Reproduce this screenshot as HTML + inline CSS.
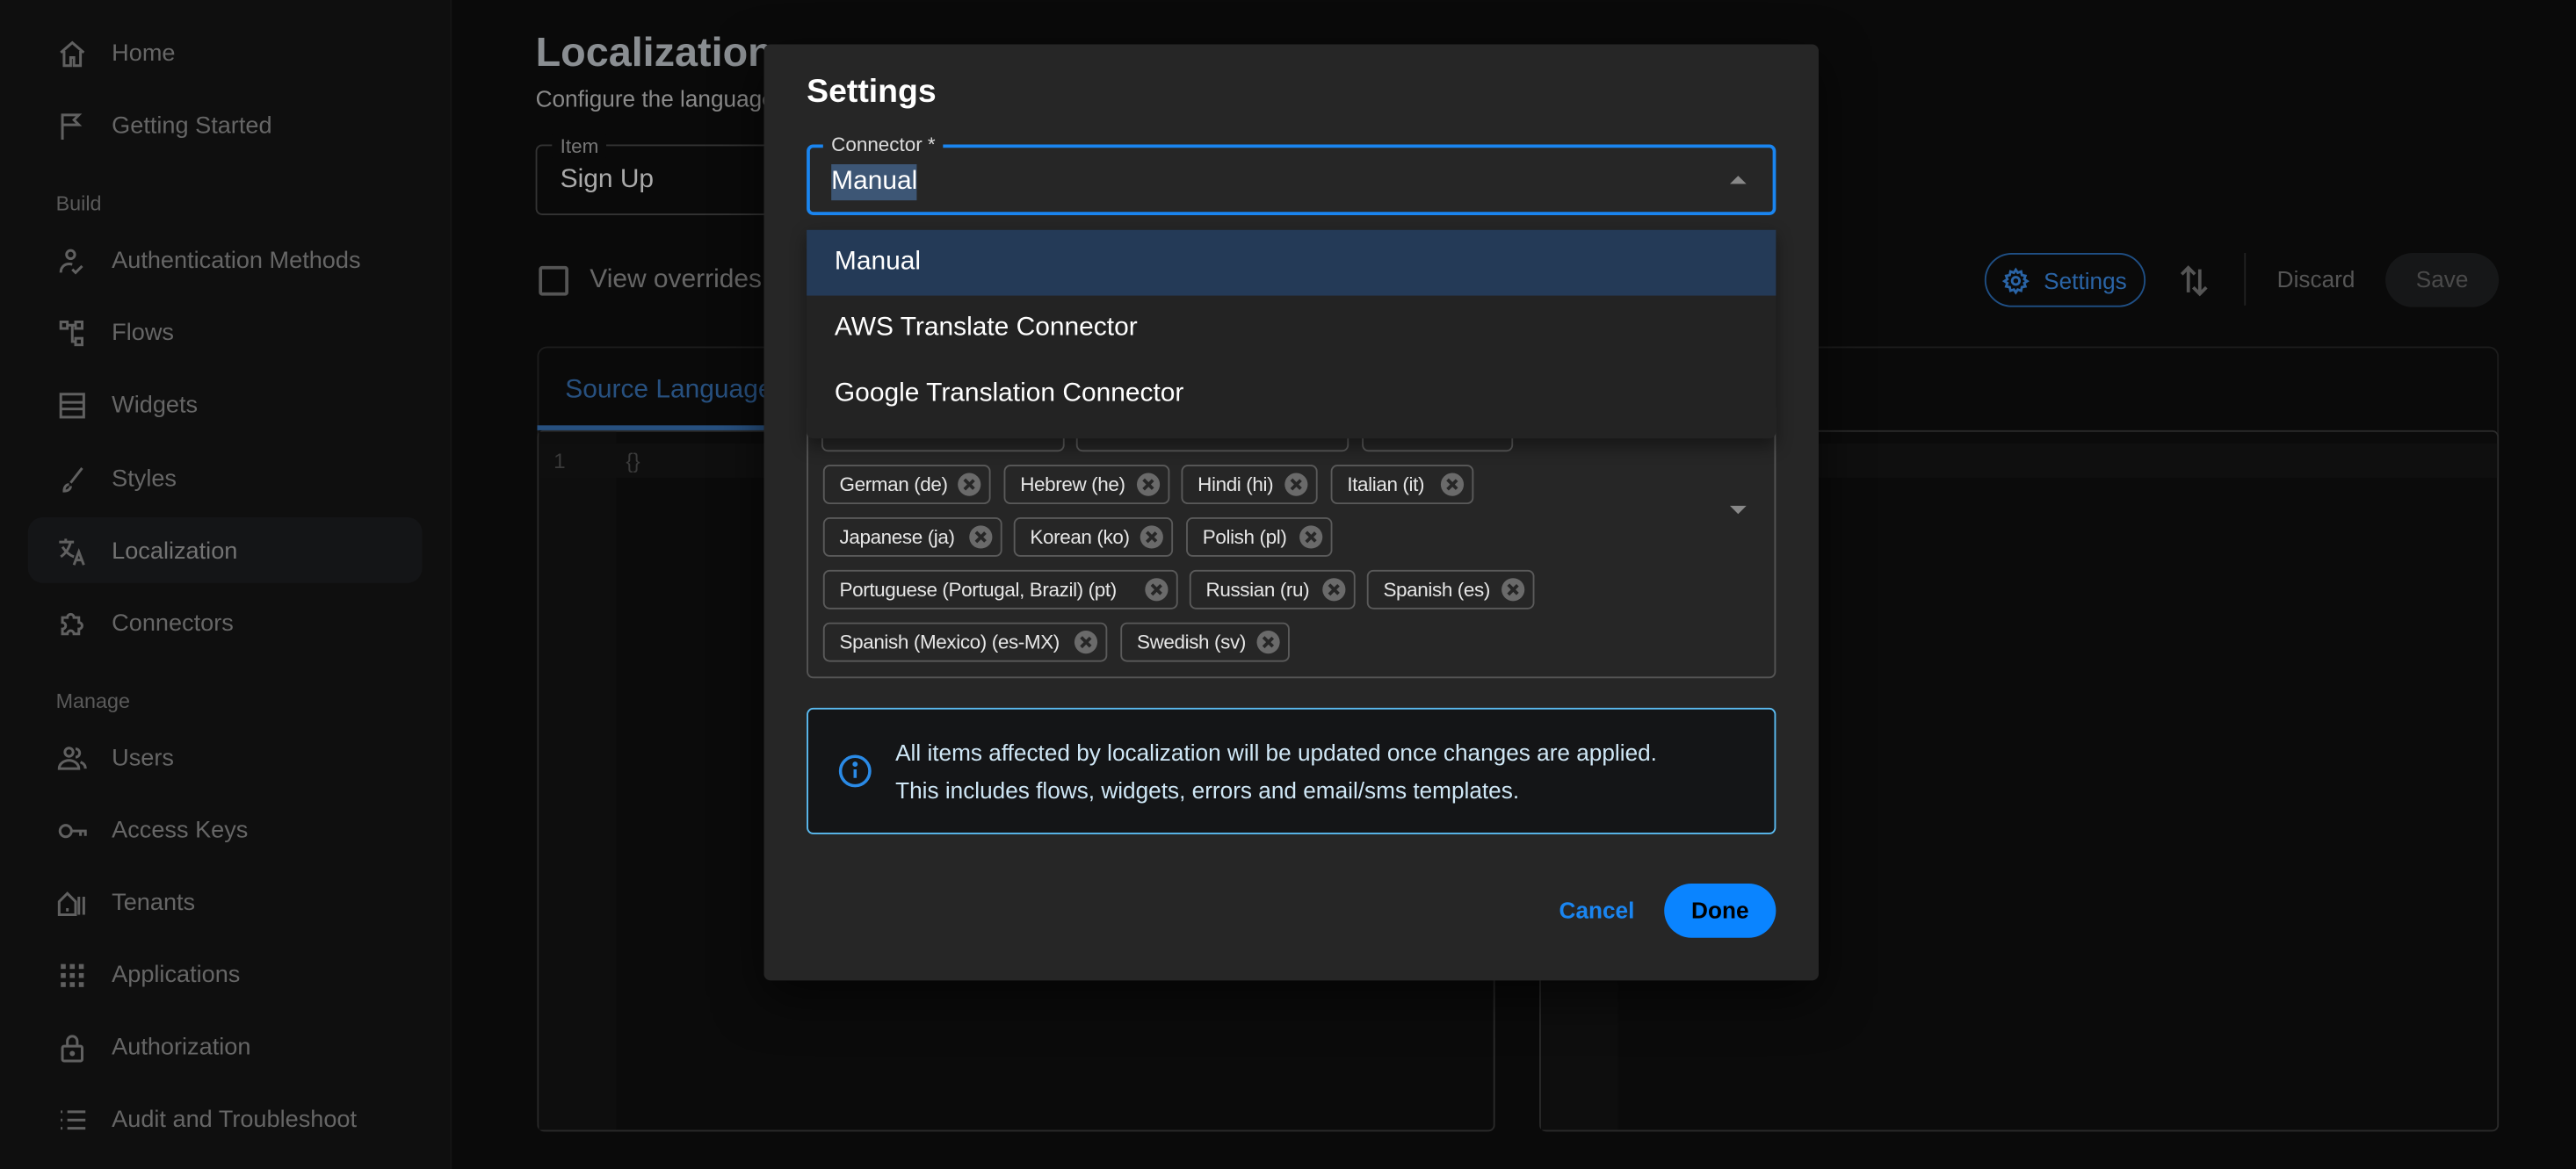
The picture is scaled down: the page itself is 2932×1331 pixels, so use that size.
<!DOCTYPE html>
<html><head><meta charset="utf-8"><style>
*{box-sizing:border-box;margin:0;padding:0}
html,body{width:2932px;height:1330px;overflow:hidden;background:#0a0a0a}
#w{position:absolute;left:0;top:0;width:1568px;height:711.3px;transform:scale(1.86990);transform-origin:0 0;font-family:"Liberation Sans",sans-serif;background:#0a0a0a}
.abs{position:absolute}
#side{left:0;top:0;width:275px;height:712px;background:#0f0f0f;border-right:1px solid #141414}
.ni{position:absolute;left:34px;height:20px;display:flex;align-items:center;color:#666;font-size:14.5px}
.ni svg{width:20px;height:20px;margin-right:14px;stroke:#606060;fill:none;stroke-width:1.6}
.sec{position:absolute;left:34px;color:#5a5a5a;font-size:12.5px}
.sel{left:17px;top:315px;width:240px;height:40px;background:#141517;border-radius:9px}
.tag{position:absolute;height:24px;border:1px solid #5a5a5a;border-radius:4px;color:#e6e6e6;font-size:12px;letter-spacing:-.2px;display:flex;align-items:center;justify-content:space-between;padding:0 5px 0 9px;white-space:nowrap}
.tag i{display:inline-block;width:14px;height:14px;border-radius:50%;background:#6a6a6a;margin-left:4px;position:relative;flex:none}
.tag i:before,.tag i:after{content:"";position:absolute;left:6.3px;top:3px;width:1.5px;height:8px;background:#262626;transform:rotate(45deg)}
.tag i:after{transform:rotate(-45deg)}
</style></head><body><div id="w">

<div id="side" class="abs">
 <div class="abs sel"></div>
 <div class="ni" style="top:23px"><svg viewBox="0 0 20 20"><path d="M3 9 10 3l7 6M5 8v9h4v-5h2v5h4V8"/></svg>Home</div>
 <div class="ni" style="top:67px"><svg viewBox="0 0 20 20"><path d="M4 18V3h10l-3 3 3 3H4"/></svg>Getting Started</div>
 <div class="sec" style="top:117px">Build</div>
 <div class="ni" style="top:149px"><svg viewBox="0 0 20 20"><circle cx="9" cy="6" r="2.5"/><path d="M3 17c0-4 3-6 7-5M10 15l2 2 4-4"/></svg>Authentication Methods</div>
 <div class="ni" style="top:193px"><svg viewBox="0 0 20 20"><rect x="3" y="3" width="4" height="4"/><rect x="12" y="3" width="4" height="4"/><rect x="12" y="13" width="4" height="4"/><path d="M7 5h5M10 5v10h2"/></svg>Flows</div>
 <div class="ni" style="top:237px"><svg viewBox="0 0 20 20"><rect x="3" y="3" width="14" height="14"/><path d="M3 8h14M3 12h14"/></svg>Widgets</div>
 <div class="ni" style="top:282px"><svg viewBox="0 0 20 20"><path d="M16 3 9 12M8 13c-2 0-3 2-3 4 2 0 4-1 4-3"/></svg>Styles</div>
 <div class="ni" style="top:326px;color:#737373"><svg viewBox="0 0 20 20"><path d="M2 4h9M6 2v2M4 7c2 3 4 5 7 6M9 4c-1 4-3 7-6 9M11 18l3-8 3 8M12 15h4"/></svg>Localization</div>
 <div class="ni" style="top:370px"><svg viewBox="0 0 20 20"><path d="M4 6h3a2 2 0 1 1 4 0h3v3a2 2 0 1 1 0 4v3h-3a2 2 0 1 0-4 0H4v-3a2 2 0 1 0 0-4z"/></svg>Connectors</div>
 <div class="sec" style="top:420px">Manage</div>
 <div class="ni" style="top:452px"><svg viewBox="0 0 20 20"><circle cx="8" cy="6" r="2.5"/><path d="M2 16c0-3 3-5 6-5s6 2 6 5zM12 4a2.5 2.5 0 0 1 0 5M15 12c2 1 3 2 3 4"/></svg>Users</div>
 <div class="ni" style="top:496px"><svg viewBox="0 0 20 20"><circle cx="6" cy="10" r="3.5"/><path d="M9.5 10H18v3M15 10v3"/></svg>Access Keys</div>
 <div class="ni" style="top:540px"><svg viewBox="0 0 20 20"><path d="M2 17V9l5-5 5 5v8zM7 13v2M14 6v11M17 6v11"/></svg>Tenants</div>
 <div class="ni" style="top:584px"><svg viewBox="0 0 20 20" style="fill:#606060;stroke:none"><rect x="3" y="3" width="3" height="3"/><rect x="8.5" y="3" width="3" height="3"/><rect x="14" y="3" width="3" height="3"/><rect x="3" y="8.5" width="3" height="3"/><rect x="8.5" y="8.5" width="3" height="3"/><rect x="14" y="8.5" width="3" height="3"/><rect x="3" y="14" width="3" height="3"/><rect x="8.5" y="14" width="3" height="3"/><rect x="14" y="14" width="3" height="3"/></svg>Applications</div>
 <div class="ni" style="top:628px"><svg viewBox="0 0 20 20"><rect x="4" y="9" width="12" height="9" rx="1"/><path d="M7 9V6a3 3 0 0 1 6 0v3"/><circle cx="10" cy="13.5" r=".8"/></svg>Authorization</div>
 <div class="ni" style="top:672px"><svg viewBox="0 0 20 20"><path d="M7 5h11M7 10h11M7 15h11M3 5h1M3 10h1M3 15h1"/></svg>Audit and Troubleshoot</div>
</div>

<div class="abs" style="left:326px;top:18px;color:#8a8e92;font-size:25px;font-weight:bold">Localization</div>
<div class="abs" style="left:326px;top:52px;color:#8a8a8a;font-size:14px">Configure the language</div>
<div class="abs" style="left:326px;top:88px;width:200px;height:43px;border:1px solid #333;border-radius:4px"></div>
<div class="abs" style="left:336px;top:82px;background:#0a0a0a;color:#777;font-size:12px;padding:0 5px">Item</div>
<div class="abs" style="left:341px;top:101px;color:#aaa;font-size:16px">Sign Up</div>
<div class="abs" style="left:328px;top:162px;width:18px;height:18px;border:2px solid #555;border-radius:2px"></div>
<div class="abs" style="left:359px;top:162px;color:#666;font-size:16px">View overrides</div>
<div class="abs" style="left:327px;top:211px;width:583px;height:478px;border:1px solid #1c1c1c;border-radius:6px"></div>
<div class="abs" style="left:327px;top:262px;width:583px;height:427px;border:1px solid #2a2a2a;border-radius:4px;background:#0b0b0b"></div>
<div class="abs" style="left:328px;top:263px;width:47px;height:425px;background:#0e0e0e"></div>
<div class="abs" style="left:328px;top:270px;width:580px;height:21px;background:#0f0f0f"></div>
<div class="abs" style="left:337px;top:273px;color:#3a3a3a;font-size:13px">1</div>
<div class="abs" style="left:381px;top:273px;color:#3a3a3a;font-size:13px">{}</div>
<div class="abs" style="left:344px;top:229px;color:#27507f;font-size:16px">Source Language</div>
<div class="abs" style="left:327px;top:259px;width:160px;height:3px;background:#27507f"></div>
<div class="abs" style="left:937px;top:211px;width:584px;height:478px;border:1px solid #1c1c1c;border-radius:6px"></div>
<div class="abs" style="left:937px;top:262px;width:584px;height:427px;border:1px solid #2a2a2a;border-radius:4px;background:#0b0b0b"></div>
<div class="abs" style="left:938px;top:263px;width:47px;height:425px;background:#0e0e0e"></div>
<div class="abs" style="left:938px;top:270px;width:582px;height:21px;background:#0f0f0f"></div>
<div class="abs" style="left:1208px;top:154px;width:98px;height:33px;border:1px solid #1f4f85;border-radius:17px;color:#2a64a6;font-size:14px;display:flex;align-items:center;padding-left:9px"><svg width="18" height="18" viewBox="0 0 20 20" fill="none" stroke="#2a64a6" stroke-width="1.7" style="margin-right:8px"><circle cx="10" cy="10" r="2.5"/><path d="M10 2.5l1.3 2 2.3-.8.5 2.4 2.4.5-.8 2.3 2 1.3-2 1.3.8 2.3-2.4.5-.5 2.4-2.3-.8-1.3 2-1.3-2-2.3.8-.5-2.4-2.4-.5.8-2.3-2-1.3 2-1.3-.8-2.3 2.4-.5.5-2.4 2.3.8z"/></svg>Settings</div>
<svg class="abs" style="left:1326px;top:160px" width="20" height="22" viewBox="0 0 20 22" fill="none" stroke="#555" stroke-width="2"><path d="M6 18V3M2 7l4-4 4 4M13 4v15M9 15l4 4 4-4"/></svg>
<div class="abs" style="left:1366px;top:154px;width:1px;height:32px;background:#222"></div>
<div class="abs" style="left:1386px;top:162px;color:#555;font-size:14px">Discard</div>
<div class="abs" style="left:1452px;top:154px;width:69px;height:33px;background:#161718;border-radius:17px;color:#4a4a4a;font-size:14px;text-align:center;line-height:33px">Save</div>

<div class="abs" style="left:465px;top:27px;width:642px;height:570px;background:#262626;border-radius:4px;box-shadow:0 10px 30px rgba(0,0,0,.6)"></div>
<div class="abs" style="left:491px;top:45px;color:#fff;font-size:20px;font-weight:bold">Settings</div>
<div class="abs" style="left:491px;top:88px;width:590px;height:43px;border:2px solid #1a85f0;border-radius:4px"></div>
<div class="abs" style="left:501px;top:81px;background:#262626;color:#ddd;font-size:12px;padding:0 5px">Connector *</div>
<div class="abs" style="left:506px;top:100px;background:#3d5675;color:#fff;font-size:16px;padding:1px 0;line-height:20px">Manual</div>
<svg class="abs" style="left:1052px;top:105px" width="12" height="8"><path d="M1 7 6 2l5 5z" fill="#888"/></svg>

<div class="abs" style="left:491px;top:245px;width:590px;height:168px;border:1px solid #555;border-radius:4px"></div>
<div class="tag" style="left:500px;top:251px;width:148px"></div>
<div class="tag" style="left:655px;top:251px;width:166px"></div>
<div class="tag" style="left:829px;top:251px;width:92px"></div>
<div class="tag" style="left:501px;top:283px;width:102px">German (de)<i></i></div>
<div class="tag" style="left:611px;top:283px;width:101px">Hebrew (he)<i></i></div>
<div class="tag" style="left:719px;top:283px;width:83px">Hindi (hi)<i></i></div>
<div class="tag" style="left:810px;top:283px;width:87px">Italian (it)<i></i></div>
<div class="tag" style="left:501px;top:315px;width:109px">Japanese (ja)<i></i></div>
<div class="tag" style="left:617px;top:315px;width:97px">Korean (ko)<i></i></div>
<div class="tag" style="left:722px;top:315px;width:89px">Polish (pl)<i></i></div>
<div class="tag" style="left:501px;top:347px;width:216px">Portuguese (Portugal, Brazil) (pt)<i></i></div>
<div class="tag" style="left:724px;top:347px;width:101px">Russian (ru)<i></i></div>
<div class="tag" style="left:832px;top:347px;width:102px">Spanish (es)<i></i></div>
<div class="tag" style="left:501px;top:379px;width:173px">Spanish (Mexico) (es-MX)<i></i></div>
<div class="tag" style="left:682px;top:379px;width:103px">Swedish (sv)<i></i></div>
<svg class="abs" style="left:1052px;top:307px" width="12" height="8"><path d="M1 1 6 6l5-5z" fill="#888"/></svg>

<div class="abs" style="left:491px;top:138px;width:590px;height:129px;background:#232323;box-shadow:0 5px 10px rgba(0,0,0,.4);border-radius:4px"></div>
<div class="abs" style="left:491px;top:140px;width:590px;height:40px;background:#243a57"></div>
<div class="abs" style="left:508px;top:151px;color:#fff;font-size:16px">Manual</div>
<div class="abs" style="left:508px;top:191px;color:#fff;font-size:16px">AWS Translate Connector</div>
<div class="abs" style="left:508px;top:231px;color:#fff;font-size:16px">Google Translation Connector</div>

<div class="abs" style="left:491px;top:431px;width:590px;height:77px;border:1px solid #5bbcf2;border-radius:4px;background:#141517"></div>
<svg class="abs" style="left:510px;top:459px" width="21" height="21" viewBox="0 0 20 20" fill="none" stroke="#2a8ae6" stroke-width="1.8"><circle cx="10" cy="10" r="8.5"/><path d="M10 9v5"/><circle cx="10" cy="6" r=".6" fill="#2a8ae6"/></svg>
<div class="abs" style="left:545px;top:447px;color:#cfe7f6;font-size:14px;line-height:23px">All items affected by localization will be updated once changes are applied.<br>This includes flows, widgets, errors and email/sms templates.</div>

<div class="abs" style="left:949px;top:546px;color:#1a85f0;font-size:14px;font-weight:bold">Cancel</div>
<div class="abs" style="left:1013px;top:538px;width:68px;height:33px;background:#0a84ff;border-radius:17px;color:#000;font-size:14px;font-weight:bold;text-align:center;line-height:33px">Done</div>
</div></body></html>
